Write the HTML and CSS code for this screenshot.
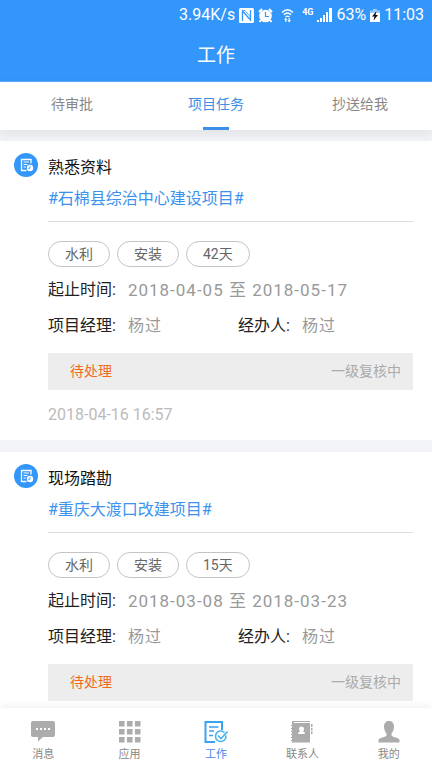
FILE: index.html
```html
<!DOCTYPE html>
<html lang="zh-CN">
<head>
<meta charset="utf-8">
<meta name="viewport" content="width=device-width, initial-scale=1">
<title>工作</title>
<link rel="stylesheet" href="styles.css">
</head>
<body>
<svg class="defs" aria-hidden="true">
  <symbol id="task" viewBox="0 0 24 24">
    <path d="M17 10.500V6.500H7.500V17.500H12.500" fill="none" stroke="#fff" stroke-width="1.300"/>
    <path d="M9.500 9H15M9.500 11.500H13.500M9.500 14H12" stroke="#fff" stroke-width="1.100"/>
    <circle cx="16" cy="15" r="3.200" fill="#fff"/>
    <path d="M16 13V15.300H14.200" fill="none" stroke="#3296fa" stroke-width=".8"/>
  </symbol>
</svg>

<header class="top">
  <div class="status">
    <span>3.94K/s</span>
    <svg class="s-nfc" width="15" height="15" viewBox="0 0 15 15"><rect width="15" height="15" rx="1.500" fill="#fff"/><path d="M3.500 13V3L11.500 12V2" fill="none" stroke="#3296fa" stroke-width="1.300"/><path d="M3.500 2.500L6 2.500L11.500 9" fill="none" stroke="#3296fa" stroke-width=".8"/></svg>
    <svg class="s-alarm" width="15" height="15" viewBox="0 0 15 15"><circle cx="7.500" cy="8" r="6.300" fill="#fff"/><path d="M1 4L4 1M14 4L11 1M3 12L1.500 14M12 12L13.500 14" stroke="#fff" stroke-width="2"/><path d="M7.500 4V8.500H11" fill="none" stroke="#3296fa" stroke-width="1.200"/></svg>
    <svg class="s-wifi" width="13" height="15" viewBox="0 0 13 15"><path d="M1 4.500Q6.500 -1 12 4.500M2.800 6.800Q6.500 3.300 10.200 6.800M4.600 9Q6.500 7.300 8.400 9" fill="none" stroke="#fff" stroke-width="1.300"/><path d="M3 12L4.800 9.800L6.500 12H5.400V14H4.200V12ZM6.500 12H7.600V10H8.800V12H10L8.200 14.500Z" fill="#fff"/></svg>
    <span class="s-4g">4G</span>
    <svg class="s-signal" width="15" height="15" viewBox="0 0 15 15"><path fill="#fff" d="M0 12H2V14H0ZM3 10H5V14H3ZM6 7H8V14H6ZM9 4H11V14H9ZM12 0H15V14H12Z"/></svg>
    <span>63%</span>
    <svg class="s-battery" width="10" height="15" viewBox="0 0 10 15"><path fill="#9acbfd" d="M3 1H7V2.500H10V6H0V2.500H3Z"/><path fill="#fff" d="M0 5H10V14H0Z"/><path d="M6.500 3L2 8.500H4.500L3.500 12.500L8 7H5.500Z" fill="#111"/></svg>
    <span>11:03</span>
  </div>
  <h1 class="title">工作</h1>
</header>

<nav class="tabs" aria-label="任务分类">
  <a class="tab" href="#">待审批</a>
  <a class="tab active" href="#">项目任务</a>
  <a class="tab" href="#">抄送给我</a>
</nav>

<main class="list">
  <article class="card">
    <svg class="badge" viewBox="0 0 24 24" aria-hidden="true"><circle cx="12" cy="12" r="12" fill="#3296fa"/><use href="#task"/></svg>
    <div class="body">
      <h2 class="name">熟悉资料</h2>
      <a class="project" href="#">#石棉县综治中心建设项目#</a>
      <div class="tags"><span class="tag">水利</span><span class="tag">安装</span><span class="tag">42天</span></div>
      <dl class="fields">
        <div class="field wide"><dt>起止时间:</dt><dd>2018-04-05 至 2018-05-17</dd></div>
        <div class="field"><dt>项目经理:</dt><dd>杨过</dd></div>
        <div class="field"><dt>经办人:</dt><dd>杨过</dd></div>
      </dl>
      <div class="state"><span class="pending">待处理</span><span class="step">一级复核中</span></div>
      <time class="time">2018-04-16 16:57</time>
    </div>
  </article>
  <article class="card">
    <svg class="badge" viewBox="0 0 24 24" aria-hidden="true"><circle cx="12" cy="12" r="12" fill="#3296fa"/><use href="#task"/></svg>
    <div class="body">
      <h2 class="name">现场踏勘</h2>
      <a class="project" href="#">#重庆大渡口改建项目#</a>
      <div class="tags"><span class="tag">水利</span><span class="tag">安装</span><span class="tag">15天</span></div>
      <dl class="fields">
        <div class="field wide"><dt>起止时间:</dt><dd>2018-03-08 至 2018-03-23</dd></div>
        <div class="field"><dt>项目经理:</dt><dd>杨过</dd></div>
        <div class="field"><dt>经办人:</dt><dd>杨过</dd></div>
      </dl>
      <div class="state"><span class="pending">待处理</span><span class="step">一级复核中</span></div>
    </div>
  </article>
</main>

<nav class="bottom" aria-label="主导航">
  <a class="item" href="#">
    <svg class="icon" viewBox="0 0 24 24"><path fill="#acacac" d="M2 1H22Q24 1 24 3V15Q24 17 22 17H12L7 21.500V17H2Q0 17 0 15V3Q0 1 2 1Z"/><path fill="#fff" d="M5 8H7V10H5ZM9 8H11V10H9ZM13 8H15V10H13ZM17 8H19V10H17Z"/></svg>
    消息</a>
  <a class="item" href="#">
    <svg class="icon" viewBox="0 0 24 24"><path fill="#acacac" d="M1 1H6.500V6.500H1ZM9 1H14.500V6.500H9ZM17 1H22.500V6.500H17ZM1 9H6.500V14.500H1ZM9 9H14.500V14.500H9ZM17 9H22.500V14.500H17ZM1 17H6.500V22.500H1ZM9 17H14.500V22.500H9ZM17 17H22.500V22.500H17Z"/></svg>
    应用</a>
  <a class="item active" href="#">
    <svg class="icon" viewBox="0 0 24 24" fill="none" stroke="#38a3f2"><path d="M18 10V2H1.500V22H11" stroke-width="2"/><path d="M5 7H14.500M5 11H10M5 15.500H9" stroke-width="1.600"/><path d="M20.500 12.500A5.300 5.300 0 1 0 22 15.500" stroke="#49b2ec" stroke-width="1.600"/><path d="M14 15.500L17 18.500L23.500 11.500" stroke="#49b2ec" stroke-width="1.600"/></svg>
    工作</a>
  <a class="item" href="#">
    <svg class="icon" viewBox="0 0 24 24"><path fill="#acacac" d="M2 1H20V2H4V3H20V22.500H2Z"/><path d="M1 5.500H4M1 8.500H4M1 11.500H4M1 14.500H4M1 17.500H4M1 20.500H4" stroke="#acacac" stroke-width="1.200"/><path fill="#acacac" d="M21 4H22.500V7H21ZM21 8H22.500V10.500H21ZM21 11.500H22.500V14H21Z"/><path fill="#fff" d="M9 9Q9 6.500 11.500 6.500T14 9T12.800 11.300Q15 12 15 14H8Q8 12 10.200 11.300Q9 10.500 9 9Z"/></svg>
    联系人</a>
  <a class="item" href="#">
    <svg class="icon" viewBox="0 0 24 24"><path fill="#acacac" d="M12 1C15 1 17 3 17 6.500C17 10 15.800 12 14.500 13.500V15.500C16 17.500 22 17.500 22.500 20V22.500H1.500V20C2 17.500 8 17.500 9.500 15.500V13.500C8.200 12 7 10 7 6.500C7 3 9 1 12 1Z"/></svg>
    我的</a>
</nav>
</body>
</html>
```

FILE: styles.css
```css
* { box-sizing: border-box; }

body {
  margin: 0;
  height: 100vh;
  display: flex;
  flex-direction: column;
  overflow: hidden;
  background: #f2f4f8;
  color: #222;
  font-family: Roboto, "Noto Sans CJK SC", sans-serif;
  font-size: 16px;
  line-height: 24px;
}

a { color: inherit; text-decoration: none; }
h1, h2, dl, dd { margin: 0; font-weight: 400; }
.defs { position: absolute; width: 0; height: 0; }

.top {
  flex: none;
  background: #3296fa;
  border-bottom: 1px solid #5cacfb;
  color: #fff;
}

.status {
  display: flex;
  justify-content: flex-end;
  align-items: center;
  height: 30px;
  padding: 0 8px;
  gap: 4px;
}
.s-wifi { margin: 0 4px; }
.s-4g { font-size: 9px; line-height: 16px; font-weight: 700; align-self: flex-start; padding-top: 4px; }

.title {
  font-size: 19px;
  line-height: 51px;
  text-align: center;
}

.tabs {
  flex: none;
  display: flex;
  height: 48px;
  background: #fff;
  box-shadow: 0 4px 12px rgba(0, 0, 0, .08);
  position: relative;
}
.tab {
  flex: 1;
  display: flex;
  flex-direction: column;
  align-items: center;
  justify-content: space-between;
  padding-top: 10px;
  font-size: 14px;
  color: #888;
}
.tab.active { color: #3b8fe8; }
.tab.active::after { content: ""; width: 26px; height: 3px; background: #3b8fe8; }

.list {
  flex: 1;
  min-height: 0;
  overflow: hidden;
  padding-top: 11px;
}

.card {
  display: flex;
  gap: 10px;
  padding: 12px 19px 12px 14px;
  margin-bottom: 12px;
  background: #fff;
}
.badge { flex: none; width: 24px; height: 24px; }
.body { flex: 1; min-width: 0; padding-top: 3px; }

.name { font-size: 16px; line-height: 24px; color: #111; }
.project {
  display: block;
  padding: 7px 0 10px;
  border-bottom: 1px solid #ddd;
  color: #3b93ee;
}

.tags { display: flex; gap: 7px; margin-top: 19px; }
.tag {
  padding: 0 16px;
  border: 1px solid #c4c4c4;
  border-radius: 13px;
  font-size: 14px;
  line-height: 24px;
  color: #666;
}

.fields {
  display: grid;
  grid-template-columns: 190px 1fr;
  row-gap: 12px;
  margin-top: 11px;
}
.field { display: flex; gap: 12px; }
.wide { grid-column: 1 / -1; }
.field dd { color: #999; letter-spacing: 1px; }
.wide dd { font-size: 17px; }

.state {
  display: flex;
  justify-content: space-between;
  margin-top: 15px;
  padding: 6px 12px 7px 22px;
  background: #ededed;
  font-size: 14px;
}
.pending { color: #f26a1b; }
.step { color: #aaa; }
.time { display: block; margin-top: 13px; padding-bottom: 1px; color: #bbb; }

.bottom {
  flex: none;
  display: flex;
  height: 60px;
  background: #fff;
  box-shadow: 0 -2px 8px rgba(0, 0, 0, .06);
  position: relative;
}
.item {
  flex: 1;
  display: flex;
  flex-direction: column;
  align-items: center;
  gap: 2px;
  padding-top: 12px;
  font-size: 11px;
  line-height: 18px;
  color: #888;
}
.item.active { color: #4488f0; }
.icon { width: 24px; height: 24px; }
```
